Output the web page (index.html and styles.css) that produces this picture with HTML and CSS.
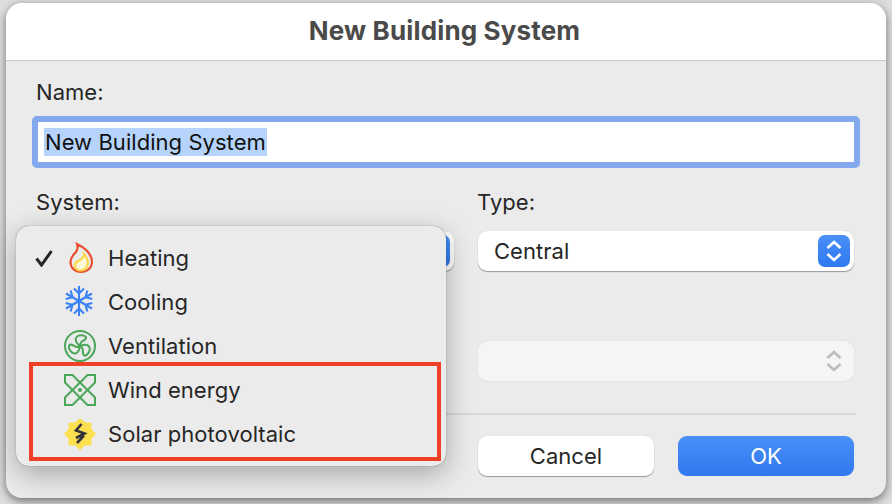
FILE: index.html
```html
<!DOCTYPE html>
<html lang="en">

<head>
    <meta charset="UTF-8">
    <title>New Building System</title>
    <link rel="stylesheet" href="styles.css">
</head>

<body>
    <div class="window">
        <div class="title">New Building System</div>

        <div class="content">
            <div class="label">Name:</div>
            <div class="name-input"><span class="selected">New Building System</span></div>

            <div class="fields">
                <div>
                    <div class="label">System:</div>
                    <div class="select">
                        <span class="stepper stepper-blue">
                            <svg width="20" height="26" viewBox="0 0 20 26" fill="none" stroke="white" stroke-width="2.6">
                                <path d="M3.500 10 10 4l6.500 6M3.500 16l6.500 6 6.500-6" />
                            </svg>
                        </span>
                    </div>
                </div>
                <div>
                    <div class="label label-type">Type:</div>
                    <div class="select">
                        <span>Central</span>
                        <span class="stepper stepper-blue">
                            <svg width="20" height="26" viewBox="0 0 20 26" fill="none" stroke="white" stroke-width="2.6">
                                <path d="M3.500 10 10 4l6.500 6M3.500 16l6.500 6 6.500-6" />
                            </svg>
                        </span>
                    </div>
                </div>
                <div class="select select-disabled">
                    <span class="stepper">
                        <svg width="20" height="26" viewBox="0 0 20 26" fill="none" stroke="#bdbdbd" stroke-width="2.6">
                            <path d="M3.500 10 10 4l6.500 6M3.500 16l6.500 6 6.500-6" />
                        </svg>
                    </span>
                </div>
            </div>

            <div class="separator"></div>

            <div class="buttons">
                <div class="button">Cancel</div>
                <div class="button button-ok">OK</div>
            </div>
        </div>

        <div class="menu">
            <div class="menu-row">
                <span class="check">
                    <svg width="18" height="18" viewBox="0 0 18 18" fill="none" stroke="#262626" stroke-width="3">
                        <path d="M1.500 9.500 6.500 16 16.500 2" />
                    </svg>
                </span>
                <svg class="icon" width="32" height="32" viewBox="0 0 32 32" fill="none" stroke-width="2.200">
                    <path stroke="#e8502f" d="M13 2C19 5 28 11 28 20 28 26 23 30 17 30 11 30 6.500 26 6.500 20 6.500 15 10 12.500 12 10 13.500 8 14 5 13 2Z" />
                    <path stroke="#fbd84a" fill="#fdf7d8" d="M20 12C24 17 24.500 20 23.500 23 22.500 27 19 28.500 16 28.500 12.500 28.500 10.500 25.500 11 22.500 11.500 19.500 14 19 16 18 18.500 16.500 20 14.500 20 12Z" />
                </svg>
                <span>Heating</span>
            </div>
            <div class="menu-row">
                <span class="check"></span>
                <svg class="icon" width="32" height="32" viewBox="0 0 32 32" fill="none" stroke="#3b82f6" stroke-width="2.100">
                    <g id="flake">
                        <path d="M15 0V30M10 2.500 15 7.500 20 2.500M10 27.500 15 22.500 20 27.500" />
                    </g>
                    <use href="#flake" transform="rotate(60 15 15)" />
                    <use href="#flake" transform="rotate(120 15 15)" />
                </svg>
                <span>Cooling</span>
            </div>
            <div class="menu-row">
                <span class="check"></span>
                <svg class="icon" width="32" height="32" viewBox="0 0 32 32" fill="none" stroke="#4aa757" stroke-width="2">
                    <circle cx="16" cy="16" r="15" />
                    <g id="blade">
                        <path d="M15.500 15.500C12 13 10.500 9.500 12.500 7 14.500 4.500 20 4.500 22 7 23 10 18.500 10.500 17 12.500 16.500 13.500 16 14.500 15.500 15.500Z" />
                    </g>
                    <use href="#blade" transform="rotate(120 16 16)" />
                    <use href="#blade" transform="rotate(240 16 16)" />
                </svg>
                <span>Ventilation</span>
            </div>

            <div class="highlight">
                <div class="menu-row">
                    <span class="check"></span>
                    <svg class="icon" width="32" height="32" viewBox="0 0 32 32" fill="none" stroke="#4aa757" stroke-width="2">
                        <path d="M16 8.500 8.500 1H1V8.500L8.500 16 1 23.500V31H8.500L16 23.500 23.500 31H31V23.500L23.500 16 31 8.500V1H23.500Z" />
                        <path d="M16 8.500 23.500 16 16 23.500 8.500 16Z" />
                        <circle cx="16" cy="16" r="2" fill="#4aa757" stroke="none" />
                    </svg>
                    <span>Wind energy</span>
                </div>
                <div class="menu-row">
                    <span class="check"></span>
                    <svg class="icon" width="32" height="32" viewBox="0 0 32 32">
                        <g fill="#fde04f">
                            <rect x="4.500" y="4.500" width="23" height="23" rx="1.500" />
                            <rect x="4.500" y="4.500" width="23" height="23" rx="1.500" transform="rotate(45 16 16)" />
                        </g>
                        <path fill="none" stroke="#33333a" stroke-width="2.600" d="M17.500 6 12 12.500 20.500 15.500 12 20M20 17.500 13 25" />
                    </svg>
                    <span>Solar photovoltaic</span>
                </div>
            </div>
        </div>
    </div>
</body>

</html>
```

FILE: styles.css
```css
body {
    margin: 0;
    width: 892px;
    height: 504px;
    padding: 3px 6px 6px;
    box-sizing: border-box;
    overflow: hidden;
    background-color: #dedede;
    color: #262626;
    font-family: Inter, "Liberation Sans", sans-serif;
    font-size: 22px;
    letter-spacing: 0.05px;
}

.window {
    position: relative;
    height: 495px;
    border-radius: 16px;
    background-color: #ebebeb;
    box-shadow: 0 3px 10px rgba(0, 0, 0, 0.5);
}

.title {
    height: 57px;
    line-height: 56px;
    padding-right: 3px;
    border-bottom: 1px solid #c9c9c9;
    border-radius: 16px 16px 0 0;
    background-color: white;
    color: #4a4a4a;
    font-size: 26px;
    font-weight: 700;
    letter-spacing: 0.15px;
    text-align: center;
}

.content {
    padding: 20px 32px 0 30px;
}

.label {
    height: 24px;
    line-height: 23px;
}

.label-type {
    margin-left: -1px;
}

.name-input {
    height: 40px;
    margin: 11px -6px 0 -4px;
    padding-left: 6px;
    border: 6px solid #85a9ee;
    border-radius: 5px;
    background-color: white;
    display: flex;
    align-items: center;
}

.selected {
    height: 28px;
    line-height: 28px;
    padding: 0 1px;
    background-color: #b6d4fb;
    color: #111;
}

.fields {
    display: grid;
    grid-template-columns: 418px 376px;
    column-gap: 24px;
    row-gap: 70px;
    margin-top: 23px;
}

.fields .label {
    margin-bottom: 16px;
}

.select {
    height: 40px;
    padding: 0 4px 0 16px;
    border-radius: 9px;
    background-color: white;
    box-shadow: 0 1px 1px rgba(0, 0, 0, 0.35), 0 0 1px rgba(0, 0, 0, 0.15);
    display: flex;
    align-items: center;
    justify-content: space-between;
}

.select-disabled {
    grid-column: 2;
    background-color: #f5f5f5;
    box-shadow: 0 0 1px rgba(0, 0, 0, 0.2);
}

.stepper {
    width: 32px;
    height: 32px;
    margin-left: auto;
    border-radius: 7px;
    display: flex;
    align-items: center;
    justify-content: center;
}

.stepper-blue {
    background: linear-gradient(#4a90f8, #2f78f0);
}

.separator {
    height: 2px;
    margin: 32px -2px 0 0;
    background-color: #d8d8d8;
}

.buttons {
    display: grid;
    grid-template-columns: 176px 176px;
    column-gap: 24px;
    justify-content: end;
    margin-top: 21px;
}

.button {
    height: 40px;
    line-height: 40px;
    border-radius: 9px;
    background-color: white;
    box-shadow: 0 1px 1px rgba(0, 0, 0, 0.35), 0 0 1px rgba(0, 0, 0, 0.15);
    text-align: center;
}

.button-ok {
    background: linear-gradient(#4a90f8, #2f78f0);
    box-shadow: 0 0 1px rgba(0, 0, 0, 0.15);
    color: white;
}

.menu {
    position: absolute;
    top: 223px;
    left: 10px;
    width: 430px;
    height: 240px;
    padding-top: 10px;
    box-sizing: border-box;
    border-radius: 13px;
    background-color: #ebebeb;
    box-shadow: 0 0 1px rgba(0, 0, 0, 0.6), 0 8px 28px rgba(0, 0, 0, 0.3);
}

.menu-row {
    height: 44px;
    display: flex;
    align-items: center;
}

.check {
    width: 48px;
    padding-left: 19px;
    box-sizing: border-box;
    display: flex;
}

.icon {
    margin-right: 12px;
}

.highlight {
    width: 404px;
    margin: -6px 0 0 13px;
    padding: 2px 0 1px;
    border: 4px solid #ee4027;
}

.highlight .menu-row {
    margin-left: -17px;
}
```
